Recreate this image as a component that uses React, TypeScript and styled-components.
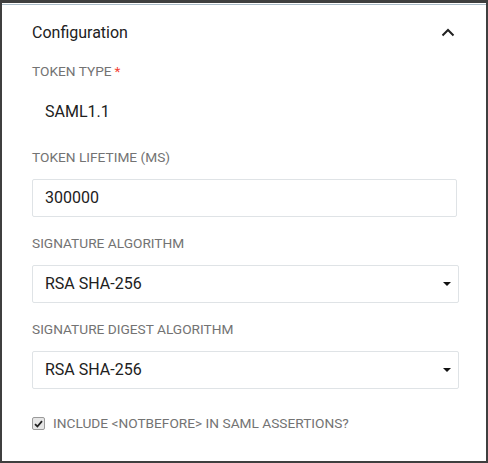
import React from "react";
import styled, { createGlobalStyle } from "styled-components";

const GlobalStyle = createGlobalStyle`
  * {
    box-sizing: border-box;
  }
  html, body {
    margin: 0;
    padding: 0;
    background: #ffffff;
  }
  body {
    font-family: Roboto, "Liberation Sans", Arial, sans-serif;
    color: #212121;
  }
`;

const Frame = styled.div`
  width: 488px;
  height: 463px;
  border: 2px solid #3f3f3f;
  border-top-width: 3px;
  background: #ffffff;
  overflow: hidden;
`;

const Panel = styled.section`
  margin-top: 1px;
  border-top: 1px solid #aabcc8;
  padding: 0 0 0 30px;
`;

const Header = styled.div`
  display: flex;
  align-items: center;
  justify-content: space-between;
  padding: 18px 30px 0 0;
  height: 37px;
`;

const Title = styled.h2`
  margin: 0;
  font-size: 16px;
  line-height: 19px;
  font-weight: 400;
  color: #212121;
`;

const Toggle = styled.button`
  display: flex;
  align-items: center;
  justify-content: center;
  width: 16px;
  height: 16px;
  padding: 0;
  border: 0;
  background: none;
  color: #212121;
  cursor: pointer;
`;

const Body = styled.div`
  display: flex;
  flex-direction: column;
  gap: 19.5px;
  padding-top: 22px;
`;

const Field = styled.div`
  display: flex;
  flex-direction: column;
  gap: 13.5px;
`;

const Label = styled.label`
  font-size: 13.7px;
  line-height: 15px;
  text-transform: uppercase;
  color: #737373;
`;

const Required = styled.span`
  color: #f44336;
  margin-left: 3px;
`;

const Static = styled.div`
  height: 38px;
  display: flex;
  align-items: center;
  padding-left: 13px;
  font-size: 16px;
`;

const Input = styled.input`
  width: 425px;
  height: 38px;
  padding: 0 12px;
  border: 1px solid #dfe3e6;
  border-radius: 2px;
  font-family: inherit;
  font-size: 16px;
  color: #212121;
  outline: none;
`;

const SelectBox = styled.div`
  position: relative;
  width: 427px;
  height: 38px;
  display: flex;
  align-items: center;
  padding: 0 12px;
  border: 1px solid #dfe3e6;
  border-radius: 2px;
  font-size: 16px;
  color: #212121;
`;

const Caret = styled.span`
  position: absolute;
  right: 7px;
  top: 16px;
  width: 0;
  height: 0;
  border-left: 4px solid transparent;
  border-right: 4px solid transparent;
  border-top: 4px solid #111111;
`;

const CheckRow = styled.label`
  display: flex;
  align-items: center;
  gap: 8px;
  margin-top: 8px;
  font-size: 13.7px;
  line-height: 15px;
  color: #737373;
  text-transform: uppercase;
`;

const Box = styled.span`
  width: 13px;
  height: 13px;
  border: 1px solid #9a9a9a;
  border-radius: 2px;
  background: #e6e6e6;
  display: flex;
  align-items: center;
  justify-content: center;
`;

function Select({ value }: { value: string }) {
  return (
    <SelectBox>
      {value}
      <Caret />
    </SelectBox>
  );
}

export default function App() {
  return (
    <>
      <GlobalStyle />
      <Frame>
        <Panel>
          <Header>
            <Title>Configuration</Title>
            <Toggle aria-label="collapse">
              <svg width="14" height="9" viewBox="0 0 14 9">
                <path d="M1.5 7.5 L7 2 L12.5 7.5" fill="none" stroke="#212121" strokeWidth="2" />
              </svg>
            </Toggle>
          </Header>
          <Body>
            <Field>
              <Label>
                Token type<Required>*</Required>
              </Label>
              <Static>SAML1.1</Static>
            </Field>
            <Field>
              <Label>Token lifetime (ms)</Label>
              <Input defaultValue="300000" />
            </Field>
            <Field>
              <Label>Signature algorithm</Label>
              <Select value="RSA SHA-256" />
            </Field>
            <Field>
              <Label>Signature digest algorithm</Label>
              <Select value="RSA SHA-256" />
            </Field>
            <CheckRow>
              <Box>
                <svg width="9" height="8" viewBox="0 0 9 8">
                  <path d="M1 4.2 L3.4 6.5 L8 1.2" fill="none" stroke="#222" strokeWidth="1.8" />
                </svg>
              </Box>
              Include &lt;NotBefore&gt; in SAML assertions?
            </CheckRow>
          </Body>
        </Panel>
      </Frame>
    </>
  );
}
